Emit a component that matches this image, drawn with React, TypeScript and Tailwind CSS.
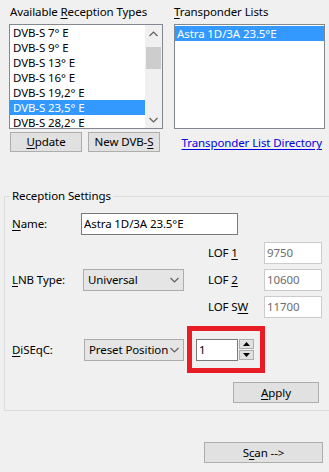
import React from "react";

const U = ({ children }: { children: React.ReactNode }) => (
  <span className="underline underline-offset-[2px]">{children}</span>
);

const Chevron = ({ dir }: { dir: "up" | "down" }) => (
  <svg width="9" height="6" viewBox="0 0 9 6">
    <polyline
      points={dir === "up" ? "0.5,5 4.5,1 8.5,5" : "0.5,1 4.5,5 8.5,1"}
      fill="none"
      stroke="#606060"
      strokeWidth="1.2"
    />
  </svg>
);

const Combo = ({ text, w }: { text: string; w: string }) => (
  <div
    className={`${w} h-[22px] bg-[#e5e5e5] border border-[#acacac] flex items-center pl-[4px] pr-[4px]`}
  >
    <span className="flex-1 leading-[16px] whitespace-nowrap overflow-hidden">{text}</span>
    <Chevron dir="down" />
  </div>
);

const LofRow = ({ label, value }: { label: React.ReactNode; value: string }) => (
  <div className="flex items-center">
    <div className="w-[56px] leading-[16px]">{label}</div>
    <div className="w-[58px] h-[22px] bg-white border border-[#cccccc] text-[#6d6d6d] pl-[2px] flex items-center leading-[16px]">
      {value}
    </div>
  </div>
);

const items = [
  "DVB-S 7° E",
  "DVB-S 9° E",
  "DVB-S 13° E",
  "DVB-S 16° E",
  "DVB-S 19,2° E",
  "DVB-S 23,5° E",
  "DVB-S 28,2° E",
];

export default function App() {
  return (
    <div className="w-[329px] h-[472px] bg-[#f0f0f0] overflow-hidden text-[11.5px] tracking-[-0.1px] text-black font-['Noto_Sans',sans-serif] pt-[4px]">
      <div className="flex">
        {/* Left column */}
        <div className="ml-[9px] w-[154px] flex flex-col">
          <div className="h-[20px] leading-[16px] pl-[1px]">
            Available <U>R</U>eception Types
          </div>
          <div className="h-[105px] border border-[#828790] bg-white flex overflow-hidden">
            <div className="flex-1 flex flex-col overflow-hidden">
              {items.map((it, i) => (
                <div
                  key={it}
                  className={`h-[15px] shrink-0 leading-[15px] pl-[3px] whitespace-nowrap ${
                    i === 5 ? "bg-[#3399ff] text-white" : ""
                  }`}
                >
                  {it}
                </div>
              ))}
            </div>
            <div className="w-[17px] bg-[#f0f0f0] flex flex-col items-center">
              <div className="h-[17px] flex items-center justify-center">
                <Chevron dir="up" />
              </div>
              <div className="mt-[5px] w-[15px] h-[22px] bg-[#cdcdcd]" />
              <div className="flex-1" />
              <div className="h-[17px] flex items-center justify-center">
                <Chevron dir="down" />
              </div>
            </div>
          </div>
          <div className="mt-[3px] flex gap-[6px] pl-[1px]">
            <div className="w-[72px] h-[20px] bg-[#e1e1e1] border border-[#adadad] flex items-center justify-center leading-[16px] whitespace-nowrap">
              <U>U</U>pdate
            </div>
            <div className="w-[72px] h-[20px] bg-[#e1e1e1] border border-[#adadad] flex items-center justify-center leading-[16px] whitespace-nowrap">
              New DVB-<U>S</U>
            </div>
          </div>
        </div>

        {/* Right column */}
        <div className="ml-[11px] w-[151px] flex flex-col">
          <div className="h-[20px] leading-[16px]">
            <U>T</U>ransponder Lists
          </div>
          <div className="h-[105px] border border-[#828790] bg-white pt-[1px]">
            <div className="h-[15px] leading-[15px] pl-[2px] bg-[#3399ff] text-white whitespace-nowrap">
              Astra 1D/3A 23.5°E
            </div>
          </div>
          <div className="mt-[6px] h-[16px] leading-[16px] text-right pr-[3px] text-[#0000dd] underline underline-offset-[2px] whitespace-nowrap">
            Transponder List Directory
          </div>
        </div>
      </div>

      {/* Group box */}
      <fieldset className="mt-[37px] ml-[4px] w-[330px] border border-[#dcdcdc] pb-[7px]">
        <legend className="ml-[5px] px-[2px] leading-[14px]">Reception Settings</legend>

        <div className="mt-[10px] pl-[7px] flex items-center">
          <div className="w-[69px] leading-[16px]">
            <U>N</U>ame:
          </div>
          <div className="w-[157px] h-[22px] bg-white border border-[#7a7a7a] pl-[2px] flex items-center leading-[16px]">
            Astra 1D/3A 23.5°E
          </div>
        </div>

        <div className="mt-[7px] pl-[7px] flex items-center">
          <div className="w-[71px] leading-[16px]">
            <U>L</U>NB Type:
          </div>
          <Combo text="Universal" w="w-[101px]" />
          <div className="ml-[24px] flex flex-col gap-[5px]">
            <LofRow label={<>LOF <U>1</U></>} value="9750" />
            <LofRow label={<>LOF <U>2</U></>} value="10600" />
            <LofRow label={<>LOF S<U>W</U></>} value="11700" />
          </div>
        </div>

        <div className="mt-[8px] pl-[7px] flex items-center">
          <div className="w-[72px] leading-[16px]">
            <U>D</U>iSEqC:
          </div>
          <Combo text="Preset Position" w="w-[100px]" />
          <div className="ml-[3px] w-[78px] h-[47px] border-[5px] border-[#e81c24] flex items-center pl-[4px]">
            <div className="w-[42px] h-[22px] bg-white border border-[#7a7a7a] pl-[2px] flex items-center leading-[16px]">
              1
            </div>
            <div className="ml-[1px] flex flex-col gap-[1px]">
              <div className="w-[15px] h-[10px] bg-[#e1e1e1] border border-[#adadad] flex items-center justify-center">
                <svg width="7" height="4" viewBox="0 0 7 4">
                  <polygon points="0,4 3.5,0 7,4" fill="#000" />
                </svg>
              </div>
              <div className="w-[15px] h-[10px] bg-[#e1e1e1] border border-[#adadad] flex items-center justify-center">
                <svg width="7" height="4" viewBox="0 0 7 4">
                  <polygon points="0,0 3.5,4 7,0" fill="#000" />
                </svg>
              </div>
            </div>
          </div>
        </div>

        <div className="mt-[9px] ml-[228px] w-[86px] h-[21px] bg-[#e1e1e1] border border-[#adadad] flex items-center justify-center leading-[16px]">
          <U>A</U>pply
        </div>
      </fieldset>

      <div className="mt-[31px] ml-[204px] w-[119px] h-[21px] bg-[#e1e1e1] border border-[#adadad] flex items-center justify-center leading-[16px]">
        S<U>c</U>an --&gt;
      </div>
    </div>
  );
}
